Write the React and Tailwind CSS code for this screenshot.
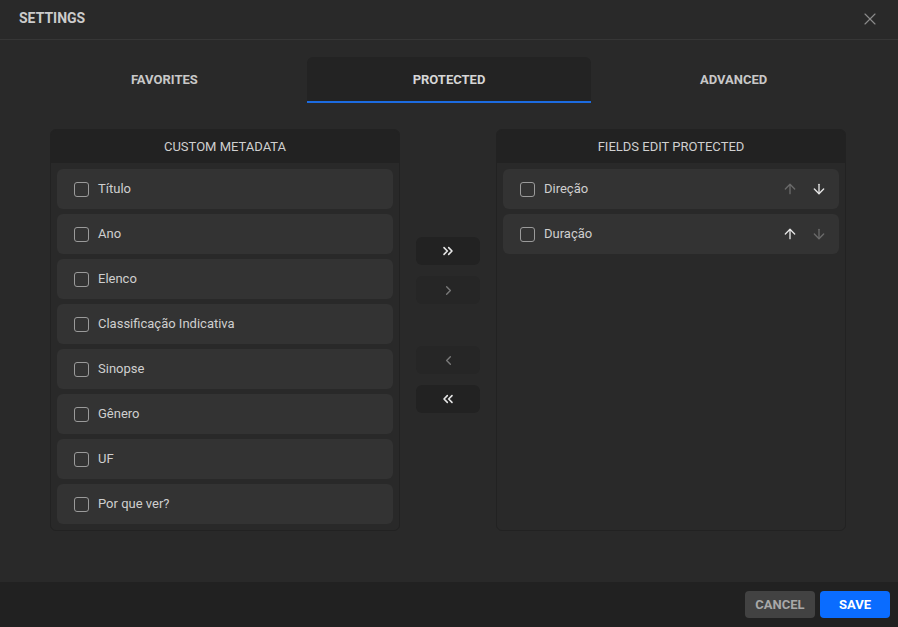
import React from "react";
import { X, ArrowUp, ArrowDown, ChevronsRight, ChevronsLeft, ChevronRight, ChevronLeft } from "lucide-react";

const left = ["Título", "Ano", "Elenco", "Classificação Indicativa", "Sinopse", "Gênero", "UF", "Por que ver?"];

function Box() {
  return <span className="w-[15px] h-[15px] rounded-[3px] border-[1.5px] border-[#9a9a9a] shrink-0" />;
}

function Item({ label, children }) {
  return (
    <div className="h-10 rounded-md bg-[#333333] flex items-center pl-[17px] pr-3 gap-[9px]">
      <Box />
      <span className="text-[13px] text-[#cfcfcf] flex-1">{label}</span>
      {children}
    </div>
  );
}

function Panel({ title, children }) {
  return (
    <div className="flex-1 h-[402px] rounded-md border border-[#222222] bg-[#292929] flex flex-col overflow-hidden">
      <div className="h-[33px] bg-[#222222] flex items-center justify-center text-[13px] text-[#d0d0d0] shrink-0">{title}</div>
      <div className="p-[6px] flex flex-col gap-[5px]">{children}</div>
    </div>
  );
}

function MoveBtn({ children, on }) {
  return (
    <div className={`h-7 w-16 rounded-md flex items-center justify-center ${on ? "bg-[#222222] text-[#e6e6e6]" : "bg-[#262626] text-[#7a7a7a]"}`}>
      {children}
    </div>
  );
}

export default function App() {
  return (
    <div className="w-[898px] h-[627px] bg-[#292929] flex flex-col" style={{ fontFamily: "Roboto, 'Liberation Sans', sans-serif" }}>
      <div className="h-10 border-b border-[#363636] flex items-center justify-between pl-[19px] pr-[18px] pb-[2px] shrink-0">
        <span className="text-[14px] font-bold text-[#cccccc]">SETTINGS</span>
        <X size={20} strokeWidth={1.4} className="text-[#8a8a8a]" />
      </div>
      <div className="flex-1 flex flex-col">
        <div className="mt-[17px] mx-[22px] flex h-[46px]">
          <div className="flex-1 flex items-center justify-center text-[13px] font-bold text-[#c8c8c8]">FAVORITES</div>
          <div className="flex-1 flex items-center justify-center pt-[2px] text-[13px] font-bold text-[#d6d6d6] bg-[#232323] rounded-t-md border-b-2 border-[#1c6be0]">PROTECTED</div>
          <div className="flex-1 flex items-center justify-center text-[13px] font-bold text-[#c8c8c8]">ADVANCED</div>
        </div>
        <div className="mt-[26px] pl-[50px] pr-[52px] flex gap-4">
          <Panel title="CUSTOM METADATA">
            {left.map((l) => <Item key={l} label={l} />)}
          </Panel>
          <div className="w-16 flex flex-col pt-[108px]">
            <MoveBtn on><ChevronsRight size={16} strokeWidth={2.4} /></MoveBtn>
            <div className="mt-[11px]"><MoveBtn><ChevronRight size={15} strokeWidth={2.2} /></MoveBtn></div>
            <div className="mt-[42px]"><MoveBtn><ChevronLeft size={15} strokeWidth={2.2} /></MoveBtn></div>
            <div className="mt-[11px]"><MoveBtn on><ChevronsLeft size={16} strokeWidth={2.4} /></MoveBtn></div>
          </div>
          <Panel title="FIELDS EDIT PROTECTED">
            <Item label="Direção">
              <div className="flex items-center gap-[13px]">
                <ArrowUp size={16} strokeWidth={2} className="text-[#6a6a6a]" />
                <ArrowDown size={16} strokeWidth={2} className="text-[#e6e6e6]" />
              </div>
            </Item>
            <Item label="Duração">
              <div className="flex items-center gap-[13px]">
                <ArrowUp size={16} strokeWidth={2} className="text-[#e6e6e6]" />
                <ArrowDown size={16} strokeWidth={2} className="text-[#6a6a6a]" />
              </div>
            </Item>
          </Panel>
        </div>
      </div>
      <div className="h-[45px] bg-[#212121] flex items-center justify-end gap-[5px] pr-2 shrink-0">
        <button className="h-[27px] w-[70px] rounded-[4px] bg-[#424242] text-[#a8a8a8] text-[13px] font-bold">CANCEL</button>
        <button className="h-[27px] w-[70px] rounded-[4px] bg-[#0a6cff] text-white text-[13px] font-bold">SAVE</button>
      </div>
    </div>
  );
}
